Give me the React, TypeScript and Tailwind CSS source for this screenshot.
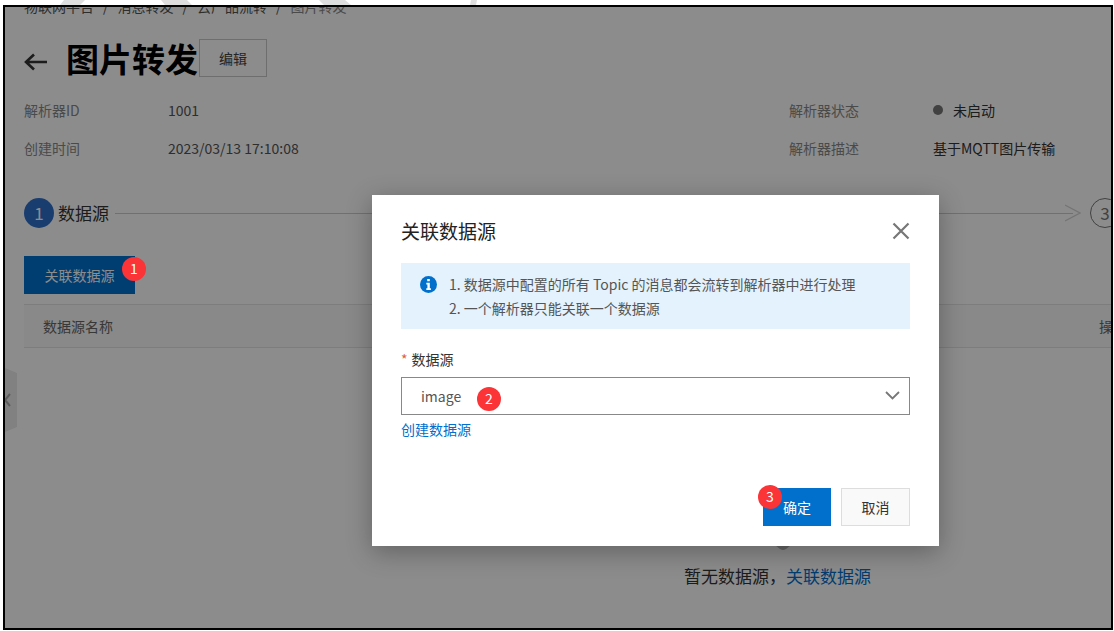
import { useState } from 'react';

const crumbs = ['物联网平台', '消息转发', '云产品流转', '图片转发'];

const notes = [
  '1. 数据源中配置的所有 Topic 的消息都会流转到解析器中进行处理',
  '2. 一个解析器只能关联一个数据源',
];

// Red numbered marker that points at a step of the guide
function Marker({ n, className }: { n: number; className: string }) {
  return (
    <span
      className={`absolute z-30 flex size-6 items-center justify-center rounded-full bg-[#fb3437] pb-0.5 text-sm leading-none text-white ${className}`}
    >
      {n}
    </span>
  );
}

function Field({ label, children }: { label: string; children: React.ReactNode }) {
  return (
    <div className="flex h-[38px] items-center">
      <dt className="w-36 shrink-0 text-[#888]">{label}</dt>
      <dd className="flex items-center whitespace-nowrap">{children}</dd>
    </div>
  );
}

function ParserPage() {
  return (
    <div className="px-[19px]">
      <nav className="flex h-2 items-end overflow-hidden text-[#555]">
        <ol className="flex leading-[18px]">
          {crumbs.map((c, i) => (
            <li key={c} className={i === crumbs.length - 1 ? 'text-[#888]' : ''}>
              {c}
              {i < crumbs.length - 1 && <span className="px-[9px]">/</span>}
            </li>
          ))}
        </ol>
      </nav>

      <header className="mt-6 flex h-[38px] items-center">
        <button aria-label="返回" className="mr-[18px] mt-2">
          <svg width="24" height="18" viewBox="0 0 24 18" fill="none" stroke="#333" strokeWidth="2.6">
            <path d="M23 9H2M10 1.500L2 9l8 7.500" />
          </svg>
        </button>
        <h1 className="text-[33px] font-bold leading-[38px] text-black">图片转发</h1>
        <button className="ml-px h-[38px] w-[68px] border border-[#c8c8c8] text-[#444]">编辑</button>
      </header>

      <div className="mt-[14px] flex">
        <dl className="flex-1 text-[#555]">
          <Field label="解析器ID">1001</Field>
          <Field label="创建时间">2023/03/13 17:10:08</Field>
        </dl>
        <dl className="w-[303px] text-[#333]">
          <Field label="解析器状态">
            <span className="mr-[10px] size-[10px] rounded-full bg-[#777]" />
            未启动
          </Field>
          <Field label="解析器描述">基于MQTT图片传输</Field>
        </dl>
      </div>

      <div className="-mr-7 mt-[31px] flex items-center">
        <span className="flex size-[30px] items-center justify-center rounded-full bg-[#2f6fcb] text-[17px] text-white">
          1
        </span>
        <span className="ml-1 text-[17px] text-[#333]">数据源</span>
        <span className="-mr-2 ml-[6px] h-px flex-1 bg-[#ccc]" />
        <svg className="mr-[9px]" width="16" height="18" viewBox="0 0 16 18" fill="none" stroke="#d4d4d4" strokeWidth="1.2">
          <path d="M0 1l15 8-15 8" />
        </svg>
        <span className="flex size-[30px] items-center justify-center rounded-full border border-[#777] text-[17px] text-[#777]">
          3
        </span>
      </div>

      <button className="relative mt-7 h-[38px] w-[111px] bg-[#0070cc] text-white">
        关联数据源
        <Marker n={1} className="-right-[11px] top-[1px]" />
      </button>

      <table className="-mr-[19px] mt-[10px] block text-left">
        <thead className="block">
          <tr className="flex h-11 items-center border-y border-[#e3e3e3] bg-[#f9f9f9] text-[#666]">
            <th className="flex-1 pl-[19px] font-normal">数据源名称</th>
            <th className="w-3 overflow-visible whitespace-nowrap font-normal">操作</th>
          </tr>
        </thead>
      </table>

      <div className="mt-[120px] flex flex-col items-end pr-[221px]">
        <svg className="mr-[76px]" width="24" height="84" viewBox="0 0 24 84" fill="#bbb">
          <path d="M0 60h24v14L15 81q-3 2-6 0L0 74z" />
        </svg>
        <p className="mt-[10px] text-[17px] leading-7 text-[#333]">
          暂无数据源，
          <a href="#" className="text-[#0070cc]">关联数据源</a>
        </p>
      </div>

      <button
        aria-label="展开导航"
        className="absolute left-0 top-[361px] h-16 w-3 bg-[#ebebeb] text-[#aaa] [clip-path:polygon(0_0,100%_8%,100%_92%,0_100%)]"
      >
        <svg width="8" height="14" viewBox="0 0 8 14" fill="none" stroke="currentColor" strokeWidth="2">
          <path d="M5 1L0 7l5 6" />
        </svg>
      </button>
    </div>
  );
}

function LinkSourceDialog() {
  const [source, setSource] = useState('image');

  return (
    <div
      role="dialog"
      aria-labelledby="dialog-title"
      className="w-[567px] bg-white px-[29px] pb-5 pt-5 shadow-[0_6px_24px_rgba(0,0,0,0.3)]"
    >
      <div className="flex h-8 items-center justify-between">
        <h2 id="dialog-title" className="text-[19px] text-[#222]">关联数据源</h2>
        <button aria-label="关闭" className="text-[#777]">
          <svg width="18" height="18" viewBox="0 0 18 18" fill="none" stroke="currentColor" strokeWidth="2.2">
            <path d="M1.500 1.500l15 15M16.500 1.500l-15 15" />
          </svg>
        </button>
      </div>

      <div className="mt-4 flex bg-[#e3f2fd] py-[9px] pl-[19px] leading-6 text-[#555]">
        <svg className="mr-3 mt-1 shrink-0" width="17" height="17" viewBox="0 0 17 17">
          <circle cx="8.5" cy="8.5" r="8.5" fill="#0070cc" />
          <path d="M7.2 3h2.6v2.3H7.2zM6.3 6.8h3.5v5.4h1.1V14H6.3v-1.8h1.1V8.6H6.3z" fill="#fff" />
        </svg>
        <div>
          {notes.map((n) => (
            <p key={n}>{n}</p>
          ))}
        </div>
      </div>

      <label htmlFor="source" className="mt-[19px] block leading-[22px] text-[#333]">
        <span className="mr-1 text-[#e0613a]">*</span>
        数据源
      </label>
      <div className="relative mt-[7px]">
        <select
          id="source"
          value={source}
          onChange={(e) => setSource(e.target.value)}
          className="block h-[38px] w-full appearance-none border border-[#888] bg-white pl-[19px] text-[#555]"
        >
          <option value="image">image</option>
        </select>
        <svg
          className="pointer-events-none absolute right-[10px] top-[14px]"
          width="15"
          height="9"
          viewBox="0 0 15 9"
          fill="none"
          stroke="#777"
          strokeWidth="1.8"
        >
          <path d="M1 1l6.500 6.500L14 1" />
        </svg>
        <Marker n={2} className="left-[76px] top-[10px]" />
      </div>
      <a href="#" className="mt-[3px] inline-block leading-[22px] text-[#0070cc]">创建数据源</a>

      <div className="mt-12 flex justify-end gap-[10px]">
        <button className="relative h-[38px] w-[68px] bg-[#0070cc] text-white">
          确定
          <Marker n={3} className="-left-[5px] -top-[3px]" />
        </button>
        <button className="h-[38px] w-[69px] border border-[#ddd] bg-[#f9f9f9] text-[#333]">取消</button>
      </div>
    </div>
  );
}

export default function App() {
  return (
    <div className="flex min-h-screen flex-col bg-white pb-px pl-[3px] pr-px font-['Noto_Sans_CJK_SC',sans-serif] text-sm">
      <svg className="block h-[5px] w-[500px]" viewBox="0 0 500 5" fill="#dedede">
        <path d="M61 0h21l-5 5H57zM158 0h26l5 5h-27zM316 0h26l6 5h-27zM468 0h6l-1 5h-6z" />
      </svg>
      <main className="relative flex-1 overflow-hidden border-2 border-black">
        <ParserPage />
        <div className="absolute inset-0 z-10 bg-black/45 pl-[367px] pt-[188px]">
          <LinkSourceDialog />
        </div>
      </main>
    </div>
  );
}
